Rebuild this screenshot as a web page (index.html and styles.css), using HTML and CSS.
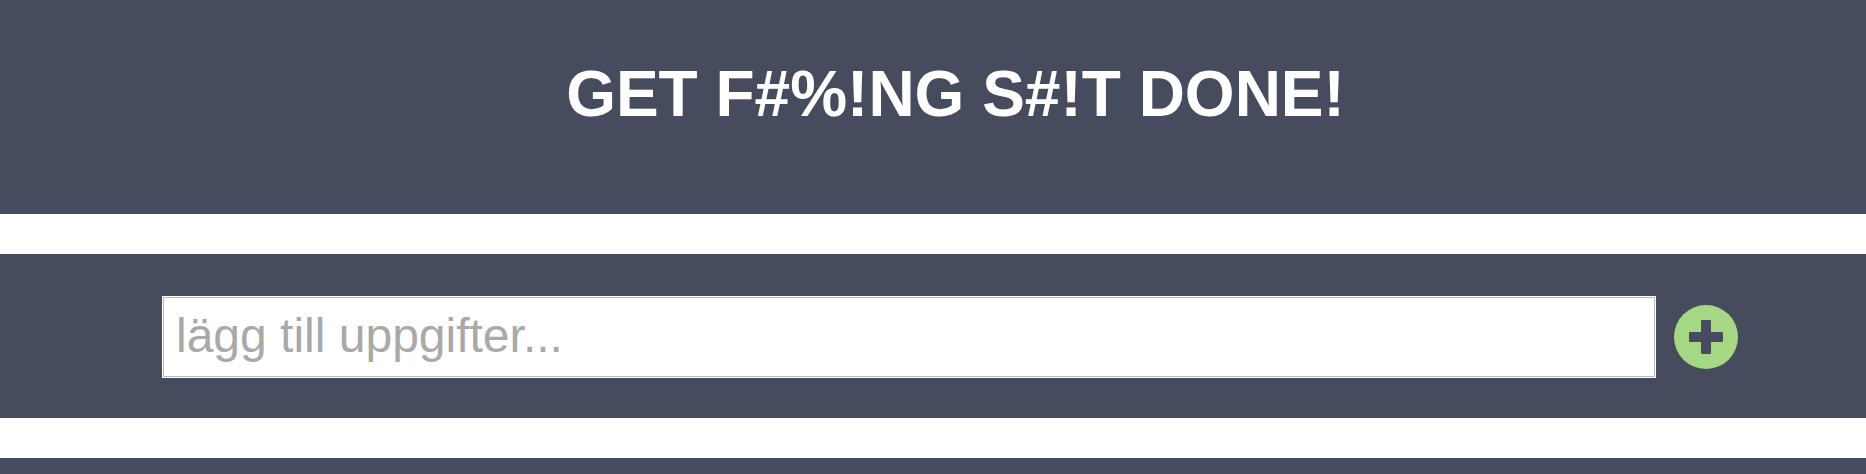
FILE: index.html
```html
<!DOCTYPE html>
<html lang="sv">
<head>
<meta charset="utf-8">
<title>Get F#%!ng S#!t Done!</title>
<link rel="stylesheet" href="styles.css">
</head>
<body>
<header class="header"><h1 class="title">GET F#%!NG S#!T DONE!</h1></header>
<main class="main">
<form class="add-form">
<input class="task-input" type="text" placeholder="lägg till uppgifter..." aria-label="lägg till uppgifter">
<button class="add-button" type="button" aria-label="Lägg till">
<svg class="add-icon" viewBox="0 0 64 64" aria-hidden="true">
<circle cx="32" cy="32" r="32" fill="#a6d785"/>
<path d="M28 15h8q1 0 1 1v11h11q1 0 1 1v8q0 1-1 1h-11v11q0 1-1 1h-8q-1 0-1-1v-11h-11q-1 0-1-1v-8q0-1 1-1h11v-11q0-1 1-1z" fill="#464b5d"/>
</svg>
</button>
</form>
<section class="task-list"></section>
</main>
</body>
</html>
```
FILE: styles.css
```css
* {
  box-sizing: border-box;
}

body {
  margin: 0;
  min-height: 100vh;
  display: flex;
  flex-direction: column;
  background: #fff;
  font-family: "Liberation Sans", Arial, sans-serif;
}

.header {
  padding: 57px 0 83px 45px;
  background: #464b5d;
}

.title {
  margin: 0;
  color: #fff;
  font-size: 64px;
  line-height: 74px;
  font-weight: bold;
  text-align: center;
}

.main {
  flex: 1;
  display: flex;
  flex-direction: column;
  gap: 40px;
  padding-top: 40px;
}

.add-form {
  display: flex;
  align-items: center;
  justify-content: center;
  gap: 18px;
  padding: 42px 0 40px 34px;
  background: #464b5d;
}

.task-input {
  width: 1494px;
  max-width: 82%;
  padding: 11px 13px 13px;
  border: 1px solid #fff;
  border-radius: 0;
  outline: none;
  box-shadow: inset 0 0 0 1px #bababa;
  background: #fff;
  color: #464b5d;
  font-family: inherit;
  font-size: 48px;
  line-height: 56px;
}

.task-input::placeholder {
  color: #a9a9a9;
  opacity: 1;
}

.add-button {
  flex: none;
  width: 64px;
  height: 64px;
  padding: 0;
  border: 0;
  border-radius: 50%;
  background: none;
  cursor: pointer;
}

.add-icon {
  display: block;
  width: 100%;
  height: 100%;
}

.task-list {
  flex: 1;
  background: #464b5d;
}
```
